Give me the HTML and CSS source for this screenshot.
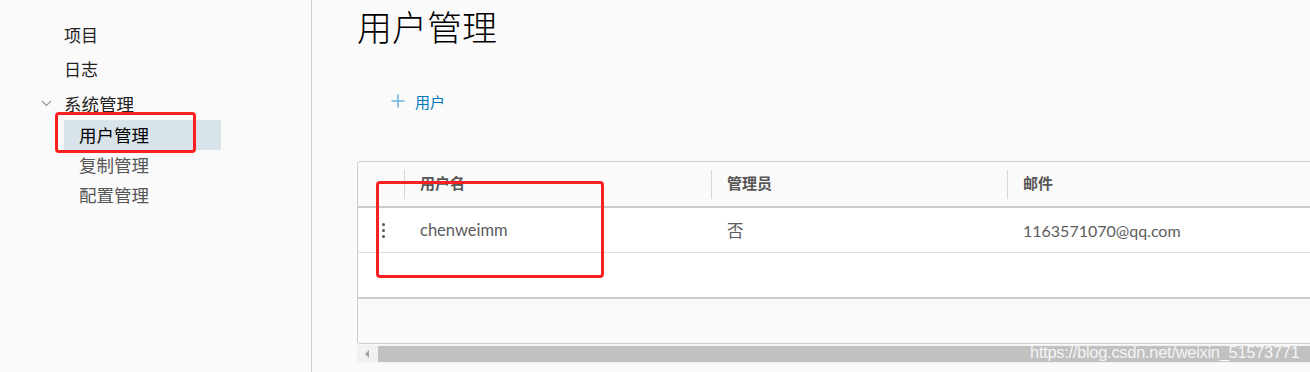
FILE: index.html
```html
<!DOCTYPE html>
<html lang="zh">
<head>
<meta charset="utf-8">
<title>用户管理</title>
<link rel="stylesheet" href="styles.css">
</head>
<body>
<div class="app">
  <nav class="sidenav">
    <a class="nav-link">项目</a>
    <a class="nav-link">日志</a>
    <div class="nav-group">
      <div class="nav-group-title">
        <svg class="chev" width="11" height="7" viewBox="0 0 11 7"><path d="M1 1 L5.5 5.5 L10 1" fill="none" stroke="#9a9a9a" stroke-width="1.2"/></svg>
        <span>系统管理</span>
      </div>
      <a class="nav-sub active">用户管理</a>
      <a class="nav-sub">复制管理</a>
      <a class="nav-sub">配置管理</a>
    </div>
  </nav>
  <main class="content">
    <h1 class="page-title">用户管理</h1>
    <div class="toolbar">
      <button class="btn-link">
        <svg width="14" height="14" viewBox="0 0 14 14"><path d="M7 0.5 V13.5 M0.5 7 H13.5" stroke="#6fb6dc" stroke-width="1.6"/></svg>
        <span>用户</span>
      </button>
    </div>
    <div class="grid-wrap">
      <div class="datagrid">
        <div class="dg-row dg-head">
          <div class="dg-cell dg-action"></div>
          <div class="dg-cell dg-col1"><span class="sep"></span>用户名</div>
          <div class="dg-cell dg-col2"><span class="sep"></span>管理员</div>
          <div class="dg-cell dg-col3"><span class="sep"></span>邮件</div>
        </div>
        <div class="dg-body">
          <div class="dg-row dg-data">
            <div class="dg-cell dg-action">
              <span class="dots"><i></i><i></i><i></i></span>
            </div>
            <div class="dg-cell dg-col1">chenweimm</div>
            <div class="dg-cell dg-col2">否</div>
            <div class="dg-cell dg-col3">1163571070@qq.com</div>
          </div>
          <div class="dg-empty"></div>
        </div>
        <div class="dg-footer"></div>
      </div>
      <div class="hscroll">
        <div class="hs-arrow"></div>
        <div class="hs-thumb"><span class="watermark">https://blog.csdn.net/weixin_51573771</span></div>
      </div>
    </div>
  </main>
</div>
<div class="mark mark-nav"></div>
<div class="mark mark-cell"></div>
</body>
</html>
```
FILE: styles.css
```css
* { box-sizing: border-box; }
html, body { margin: 0; padding: 0; }
body {
  background: #fafafa;
  font-family: "Lato", "Noto Sans CJK SC", sans-serif;
  color: #565656;
  width: 1310px;
  height: 372px;
  overflow: hidden;
  position: relative;
}
.app { display: flex; height: 372px; }

.sidenav {
  width: 312px;
  flex: none;
  border-right: 1px solid #cccccc;
  padding-top: 18px;
  display: flex;
  flex-direction: column;
}
.nav-link {
  display: block;
  height: 34px;
  line-height: 34px;
  padding-left: 64px;
  font-size: 17px;
  color: #222;
  font-family: "Noto Sans CJK SC", sans-serif;
}
.nav-group-title {
  height: 34px;
  display: flex;
  align-items: center;
  font-size: 17.5px;
  color: #222;
  font-family: "Noto Sans CJK SC", sans-serif;
}
.chev { margin-left: 41px; margin-right: 12px; margin-top: 1px; }
.nav-sub {
  display: block;
  height: 30px;
  line-height: 29px;
  margin-left: 64px;
  width: 157px;
  padding-left: 15px;
  font-size: 17.5px;
  color: #565656;
  font-family: "Noto Sans CJK SC", sans-serif;
}
.nav-sub.active { background: #d9e4ea; color: #000; }

.content {
  flex: 1;
  padding: 4px 0 0 45px;
  overflow: hidden;
}
.page-title {
  margin: 0;
  font-size: 35px;
  line-height: 44px;
  font-weight: 300;
  color: #000;
  font-family: "Noto Sans CJK SC", sans-serif;
}
.toolbar { margin-top: 35px; height: 36px; display: flex; align-items: center; }
.btn-link {
  border: none;
  background: none;
  padding: 0 0 0 34px;
  display: flex;
  align-items: center;
  gap: 10px;
  cursor: pointer;
  font-family: "Noto Sans CJK SC", sans-serif;
  font-size: 15px;
  color: #0079b8;
}
.grid-wrap { margin-top: 42px; width: 1000px; }
.datagrid {
  border: 1px solid #cccccc;
  border-radius: 3px;
  background: #fafafa;
  width: 1000px;
}
.dg-row { display: flex; }
.dg-head {
  height: 46px;
  border-bottom: 2px solid #cccccc;
  align-items: center;
  font-family: "Noto Sans CJK SC", sans-serif;
  font-weight: bold;
  font-size: 15px;
  color: #565656;
}
.dg-cell { position: relative; padding-left: 16px; }
.dg-action { width: 46px; padding: 0; flex: none; }
.dg-col1 { width: 307px; flex: none; }
.dg-col2 { width: 296px; flex: none; }
.dg-col3 { flex: 1; }
.dg-head .dg-cell { height: 44px; line-height: 42px; }
.sep {
  position: absolute;
  left: 0;
  top: 8px;
  width: 1px;
  height: 29px;
  background: #d5d5d5;
}
.dg-body { background: #fff; border-bottom: 2px solid #cccccc; }
.dg-data {
  height: 45px;
  align-items: center;
  border-bottom: 1px solid #dddddd;
  font-size: 16.5px;
  color: #5c5c5c;
}
.dg-data .dg-col3 { font-size: 16px; }
.dg-data .dg-col2 { font-family: "Noto Sans CJK SC", sans-serif; font-size: 16.5px; }
.dg-empty { height: 44px; }
.dots { display: flex; flex-direction: column; gap: 3px; margin-left: 24px; width: 3px; }
.dots i { display: block; width: 3px; height: 3px; border-radius: 50%; background: #555; }
.dg-footer { height: 44px; }

.hscroll {
  margin-top: 1px;
  height: 18px;
  display: flex;
  background: #f1f1f1;
}
.hs-arrow {
  width: 21px;
  flex: none;
  position: relative;
}
.hs-arrow::before {
  content: "";
  position: absolute;
  left: 8px;
  top: 5px;
  border-top: 4px solid transparent;
  border-bottom: 4px solid transparent;
  border-right: 4px solid #a3a3a3;
}
.hs-thumb {
  flex: 1;
  margin: 1px 0;
  background: #c1c1c1;
  position: relative;
}
.watermark {
  position: absolute;
  left: 652px;
  top: -3px;
  font-family: "Liberation Sans", sans-serif;
  font-size: 16.5px;
  letter-spacing: -0.3px;
  color: rgba(255,255,255,0.85);
  white-space: nowrap;
}

.mark {
  position: absolute;
  border: 3px solid #fd2020;
  border-radius: 4px;
}
.mark-nav { left: 55px; top: 112px; width: 141px; height: 41px; }
.mark-cell { left: 376px; top: 181px; width: 228px; height: 97px; }
```
